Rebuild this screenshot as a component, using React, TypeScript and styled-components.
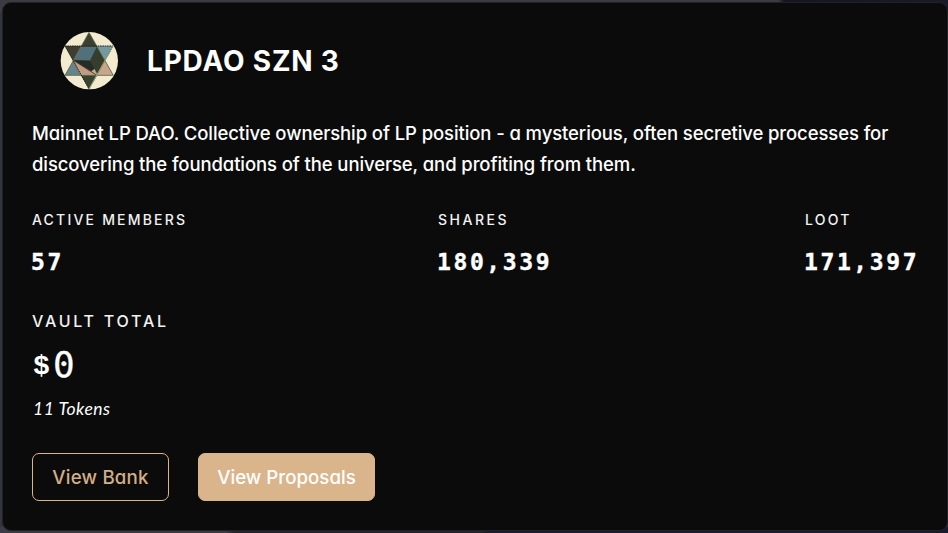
import React from "react";
import styled, { createGlobalStyle } from "styled-components";

const Global = createGlobalStyle`
  * { box-sizing: border-box; }
  body { margin: 0; background: #34343d; overflow: hidden; }
`;

const sans = `Inter, "Noto Sans", sans-serif`;

const Page = styled.main`
  width: 948px;
  height: 533px;
  padding: 2px 0 2px 2px;
  background:
    linear-gradient(90deg, #3c3b45 0 225px, #25242d 235px 480px, #191a2c 490px) 0 100% / 100% 6px no-repeat,
    linear-gradient(90deg, #3c3b43 0 778px, #151624 784px, #181a29) 0 0 / 100% 12px no-repeat,
    #34343d;
  color: #fff;
  font-family: ${sans};
  font-feature-settings: "cv11" 1;
`;

const Card = styled.section`
  width: 946px;
  height: 529px;
  padding: 28px 28px 0 29px;
  border: 1px solid #222124;
  border-radius: 9px;
  background: #0b0b0b;
`;

const Header = styled.header`
  display: flex;
  align-items: center;
  height: 60px;
  padding-left: 28px;
  gap: 29px;
`;

const Title = styled.h1`
  margin: 0;
  font-size: 28px;
  line-height: 36px;
  font-weight: 700;
  letter-spacing: 0.8px;
`;

const Description = styled.p`
  margin: 27px 0 0;
  font-size: 18.5px;
  font-weight: 450;
  line-height: 31px;
  letter-spacing: -0.1px;
`;

const Line = styled.span`
  display: block;
  white-space: nowrap;
`;

const Stats = styled.div`
  display: grid;
  grid-template-columns: 406px 367px auto;
  margin-top: 28px;
`;

const Stat = styled.div``;

const Label = styled.div<{ $size: number; $track: number }>`
  height: 24px;
  line-height: 24px;
  font-size: ${(p) => p.$size}px;
  font-weight: 450;
  letter-spacing: ${(p) => p.$track}px;
  color: #f2f2f2;
  white-space: nowrap;
`;

const Value = styled.div`
  margin-top: 14px;
  margin-left: -1px;
  height: 32px;
  line-height: 32px;
  font-family: "DejaVu Sans Mono", monospace;
  font-size: 23px;
  font-weight: 700;
  letter-spacing: 2.6px;
  -webkit-text-stroke: 0.4px #fff;
`;

const Vault = styled.div`
  margin-top: 31px;
`;

const Total = styled.div`
  display: flex;
  align-items: center;
  height: 44px;
  margin-top: 10px;
  font-family: "DejaVu Sans Mono", monospace;
  line-height: 44px;
`;

const Currency = styled.span`
  width: 21px;
  padding: 3px 0 0 1px;
  font-family: "Liberation Mono", monospace;
  font-size: 28px;
  font-weight: 700;
`;

const Amount = styled.span`
  font-size: 36px;
  -webkit-text-stroke: 0.3px #fff;
`;

const Tokens = styled.div`
  margin: 10px 0 0 1px;
  height: 24px;
  line-height: 24px;
  font-family: Lato, sans-serif;
  font-size: 17.5px;
  font-style: italic;
  letter-spacing: 0.5px;
`;

const Actions = styled.div`
  display: flex;
  gap: 29px;
  margin-top: 32px;
`;

const Button = styled.button<{ $filled?: boolean; $width: number }>`
  width: ${(p) => p.$width}px;
  height: 48px;
  padding: 0;
  border: 1px solid #dab48b;
  border-radius: 7px;
  background: ${(p) => (p.$filled ? "#dab48b" : "transparent")};
  color: ${(p) => (p.$filled ? "#fff" : "#d4ae86")};
  font: ${(p) => (p.$filled ? 550 : 450)} 18.7px ${sans};
  font-feature-settings: "cv11" 1;
  letter-spacing: ${(p) => (p.$filled ? 0 : 0.2)}px;
`;

const Emblem = () => (
  <svg width="58" height="58" viewBox="31 30 174 174" aria-hidden="true">
    <circle cx="119" cy="116" r="86" fill="#f2ebcf" />
    <path d="M118 31 191 160H46Z" fill="#535b50" />
    <path d="M46 72H190L118 201Z" fill="#434638" />
    <path d="M46 72H96L71 115Z" fill="#403c2f" />
    <path d="M93 74H142L122 115 72 113Z" fill="#527079" />
    <path d="M141 72H190L164 118Z" fill="#7599a0" />
    <path d="M118 32 141 72H96Z" fill="#3c402f" />
    <path d="M72 115 122 117 144 158Z" fill="#252b25" />
    <path d="M72 117 139 160H92Z" fill="#c39d82" />
    <path d="M71 117 94 160H46Z" fill="#66848a" />
    <path d="M166 117 190 160H143L125 148Z" fill="#c9a58a" />
    <path d="M142 74 166 116 143 157 121 116Z" fill="#353d2c" />
    <path d="M94 160H142L118 201Z" fill="#3a432f" />
    <path d="M118 31 191 160H46Z" fill="none" stroke="#697058" strokeWidth="2.5" />
    <path d="M46 72H190L118 201Z" fill="none" stroke="#22261e" strokeWidth="3" strokeDasharray="5 2" />
    <path d="M190 72 118 201" stroke="#9aae84" strokeWidth="3" />
  </svg>
);

export default function App() {
  return (
    <Page>
      <Global />
      <Card>
        <Header>
          <Emblem />
          <Title>LPDAO SZN 3</Title>
        </Header>
        <Description>
          <Line>Mainnet LP DAO. Collective ownership of LP position - a mysterious, often secretive processes for</Line>
          <Line>discovering the foundations of the universe, and profiting from them.</Line>
        </Description>
        <Stats>
          <Stat>
            <Label $size={14} $track={2.2}>ACTIVE MEMBERS</Label>
            <Value>57</Value>
          </Stat>
          <Stat>
            <Label $size={14} $track={2.5}>SHARES</Label>
            <Value>180,339</Value>
          </Stat>
          <Stat>
            <Label $size={14} $track={2.2}>LOOT</Label>
            <Value>171,397</Value>
          </Stat>
        </Stats>
        <Vault>
          <Label $size={16} $track={2.75}>VAULT TOTAL</Label>
          <Total>
            <Currency>$</Currency>
            <Amount>0</Amount>
          </Total>
          <Tokens>11 Tokens</Tokens>
        </Vault>
        <Actions>
          <Button $width={137}>View Bank</Button>
          <Button $width={177} $filled>View Proposals</Button>
        </Actions>
      </Card>
    </Page>
  );
}
